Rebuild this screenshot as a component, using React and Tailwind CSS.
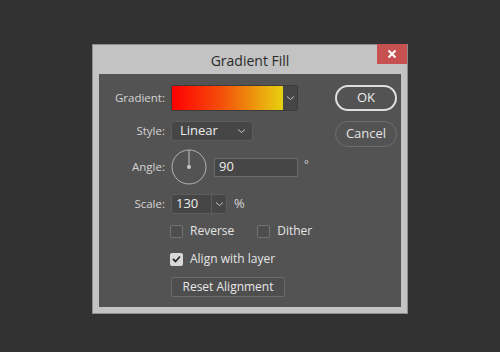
import React from 'react';

const Chevron = ({ className = '' }) => (
  <svg width="9" height="6" viewBox="0 0 9 6" className={className}>
    <path d="M1 1.5 L4.5 4.5 L8 1.5" fill="none" stroke="#c4c4c4" strokeWidth="1" />
  </svg>
);

const Checkbox = ({ checked }) =>
  checked ? (
    <span className="shrink-0 w-[13px] h-[13px] rounded-[2px] bg-[#d8d8d8] flex items-center justify-center">
      <svg width="9" height="8" viewBox="0 0 9 8">
        <path d="M1 4 L3.5 6.5 L8 1.5" fill="none" stroke="#2c2c2c" strokeWidth="1.8" />
      </svg>
    </span>
  ) : (
    <span className="shrink-0 block w-[13px] h-[13px] rounded-[2px] border border-[#717171] bg-[#4d4d4d]" />
  );

const Label = ({ children, className = '' }) => (
  <div className={`shrink-0 w-[72px] pr-[6px] text-right text-[11.5px] text-[#d3d3d3] ${className}`}>{children}</div>
);

export default function App() {
  return (
    <div
      className="w-[500px] h-[352px] bg-[#323232] flex justify-center pt-[44px]"
      style={{ fontFamily: '"Open Sans", "Noto Sans", sans-serif' }}
    >
      <div className="w-[316px] h-[270px] border border-[#8c8c8c] bg-[#c3c3c3] flex flex-col px-[6px] pb-[6px]">
        {/* title bar */}
        <div className="relative h-[29px] flex items-center justify-center">
          <span className="text-[14px] text-[#2a2a2a] pt-[1px]">Gradient Fill</span>
          <div className="absolute top-[-1px] right-[-6px] w-[30px] h-[20px] bg-[#c75050] flex items-center justify-center">
            <svg width="10" height="10" viewBox="0 0 10 10">
              <path d="M1.5 1.5 L8.5 8.5 M8.5 1.5 L1.5 8.5" stroke="#ffffff" strokeWidth="2" />
            </svg>
          </div>
        </div>

        {/* body */}
        <div className="flex-1 bg-[#535353] flex pt-[11px] pr-[4px]">
          <div className="flex flex-col">
            {/* Gradient */}
            <div className="flex items-center h-[26px]">
              <Label>Gradient:</Label>
              <div className="flex h-[26px] border border-[#3c3c3c] rounded-[2px]">
                <div className="w-[111px] bg-[linear-gradient(to_right,#ff0000,#f4500a_45%,#e7d20f)]" />
                <div className="w-[14px] bg-[#464646] flex items-center justify-center">
                  <Chevron />
                </div>
              </div>
            </div>

            {/* Style */}
            <div className="flex items-center h-[20px] mt-[10px]">
              <Label>Style:</Label>
              <div className="w-[82px] h-[20px] bg-[#464646] border border-[#5c5c5c] rounded-[3px] flex items-center justify-between pl-[8px] pr-[6px]">
                <span className="text-[13px] text-[#ececec]">Linear</span>
                <Chevron />
              </div>
            </div>

            {/* Angle */}
            <div className="flex items-center h-[36px] mt-[8px]">
              <Label>Angle:</Label>
              <svg width="36" height="36" viewBox="0 0 36 36" className="shrink-0">
                <circle cx="18" cy="18" r="17" fill="none" stroke="#b4b4b4" strokeWidth="1" />
                <line x1="18" y1="1.5" x2="18" y2="18" stroke="#c8c8c8" strokeWidth="1" />
                <circle cx="18" cy="18" r="2" fill="#c8c8c8" />
              </svg>
              <div className="ml-[7px] w-[84px] h-[19px] bg-[#464646] border border-[#6a6a6a] flex items-center pl-[4px]">
                <span className="text-[13px] text-[#ececec]">90</span>
              </div>
              <span className="ml-[6px] mb-[6px] text-[11px] text-[#d3d3d3]">°</span>
            </div>

            {/* Scale */}
            <div className="flex items-center h-[20px] mt-[9px]">
              <Label>Scale:</Label>
              <div className="flex w-[56px] h-[20px] bg-[#464646] border border-[#5c5c5c] rounded-[3px]">
                <div className="w-[40px] border-r border-[#5c5c5c] flex items-center pl-[4px]">
                  <span className="text-[13px] text-[#ececec]">130</span>
                </div>
                <div className="flex-1 flex items-center justify-center">
                  <Chevron />
                </div>
              </div>
              <span className="ml-[7px] text-[13px] text-[#d3d3d3]">%</span>
            </div>

            {/* checkboxes */}
            <div className="flex items-center h-[14px] mt-[10px] ml-[71px]">
              <Checkbox />
              <span className="ml-[7px] text-[12px] text-[#e4e4e4]">Reverse</span>
              <span className="ml-[23px] flex"><Checkbox /></span>
              <span className="ml-[7px] text-[12px] text-[#e4e4e4]">Dither</span>
            </div>
            <div className="flex items-center h-[14px] mt-[14px] ml-[71px]">
              <Checkbox checked />
              <span className="ml-[7px] text-[12px] text-[#e4e4e4]">Align with layer</span>
            </div>

            <div className="mt-[11px] ml-[72px] w-[114px] h-[20px] border border-[#6b6b6b] rounded-[2px] bg-[#4e4e4e] flex items-center justify-center">
              <span className="text-[12px] text-[#e8e8e8]">Reset Alignment</span>
            </div>
          </div>

          {/* buttons */}
          <div className="ml-auto flex flex-col gap-[10px]">
            <div className="w-[62px] h-[26px] rounded-full border-2 border-[#dedede] flex items-center justify-center">
              <span className="text-[13px] text-[#eeeeee]">OK</span>
            </div>
            <div className="w-[62px] h-[26px] rounded-full border border-[#6e6e6e] flex items-center justify-center">
              <span className="text-[13px] text-[#e4e4e4]">Cancel</span>
            </div>
          </div>
        </div>
      </div>
    </div>
  );
}
